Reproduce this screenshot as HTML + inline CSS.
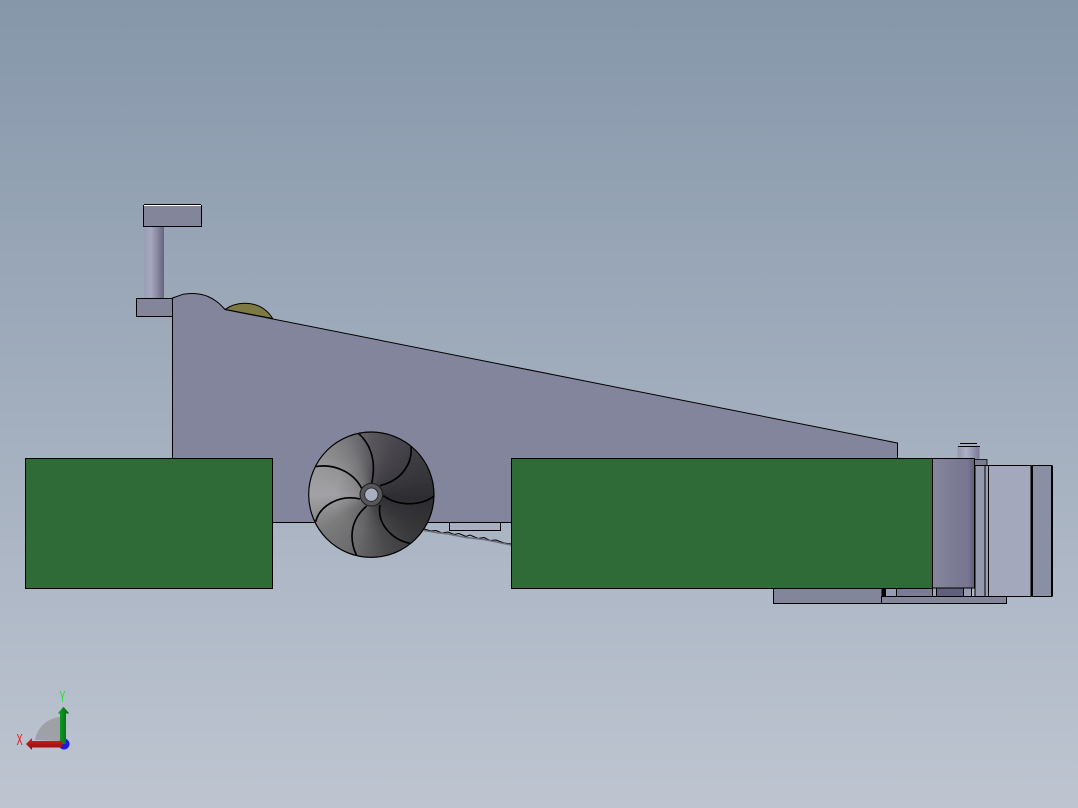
<!DOCTYPE html>
<html><head><meta charset="utf-8">
<style>
html,body{margin:0;padding:0;width:1078px;height:808px;overflow:hidden}
body{position:relative;background:linear-gradient(#8697aa,#bec5d1)}
#fan{position:absolute;left:308px;top:431.5px;width:126px;height:126px;border-radius:50%;
background:
radial-gradient(circle at 50% 50%,rgba(50,50,55,.3) 0,rgba(50,50,55,0) 40%),
conic-gradient(from 0deg,#59565c 0deg,#48464c 25deg,#3a393e 60deg,#2d2d31 95deg,#37373a 130deg,#4a4a4c 165deg,#69696b 195deg,#7c7c7d 235deg,#a3a3a7 270deg,#949496 305deg,#7a7a7c 335deg,#59565c 360deg)}
svg{position:absolute;left:0;top:0}
</style></head><body>
<svg width="1078" height="808" viewBox="0 0 1078 808" style="z-index:0">
<defs>
<linearGradient id="cy1" x1="0" x2="1" y1="0" y2="0"><stop offset="0" stop-color="#9a9eb4"/><stop offset=".35" stop-color="#a5a8bd"/><stop offset=".7" stop-color="#85859f"/><stop offset="1" stop-color="#636380"/></linearGradient>
<linearGradient id="cy2" x1="0" x2="1" y1="0" y2="0"><stop offset="0" stop-color="#85889c"/><stop offset=".55" stop-color="#7b7a93"/><stop offset=".85" stop-color="#77758f"/><stop offset="1" stop-color="#5f5e78"/></linearGradient>
<linearGradient id="cy3" x1="0" x2="1" y1="0" y2="0"><stop offset="0" stop-color="#9498ae"/><stop offset=".4" stop-color="#adb1c5"/><stop offset="1" stop-color="#7a7a96"/></linearGradient>
<linearGradient id="gs" x1="0" x2="1" y1="0" y2="0"><stop offset="0" stop-color="#0fa526"/><stop offset=".6" stop-color="#0a7f1c"/><stop offset="1" stop-color="#06600f"/></linearGradient>
<linearGradient id="rs" x1="0" x2="0" y1="0" y2="1"><stop offset="0" stop-color="#d92020"/><stop offset="1" stop-color="#8e0c0c"/></linearGradient>
</defs>
<!-- body -->
<path d="M225 309.500L272.700 318.500C266 308 256 303.300 245 303.300C236 303.300 230 306 225 309.500Z" fill="#7c7a42" stroke="#000" stroke-width="1"/>
<rect x="144" y="226" width="20" height="72" fill="url(#cy1)"/>
<path d="M172.500 522.500V298L183 294.300C190 293 200 293 208 296.500C216 300 220 304 225 309.500L897.500 443V522.500Z" fill="#82859b" stroke="#000" stroke-width="1"/>
<rect x="136.500" y="298.500" width="36" height="18" fill="#83869b" stroke="#000"/>
<rect x="143.500" y="205.500" width="58" height="21" fill="#83869b" stroke="#000"/>
<path d="M144 204.500H201" stroke="#000" stroke-width="1"/>
<path d="M144 205.500H201" stroke="#fff" stroke-width="1"/>
<!-- under parts -->
<rect x="449.500" y="522.500" width="51" height="8" fill="#a9afbf" stroke="#000"/>
<path d="M424 529L431 531L436 530.500L442 533L448 532L454 534.500L459 533.500L466 536.500L470 535L478 538.500L484 537.500L490 540.500L496 540L504 543L511 544" fill="none" stroke="#000" stroke-width="1"/>
<path d="M424 530.500L436 532.500L448 534L466 537.500L484 539.500L511 545" fill="none" stroke="#6d7080" stroke-width="1.500"/>
<!-- right assembly -->
<path d="M960 443.500H977" stroke="#000"/>
<rect x="957.500" y="446" width="22" height="14" fill="url(#cy3)"/>
<path d="M958 446.500H980" stroke="#000"/>
<rect x="972" y="459.500" width="15" height="6" fill="#7b7b92" stroke="#000" stroke-width=".8"/>
<rect x="975" y="465.500" width="10" height="131" fill="#9599ad" stroke="#000"/>
<rect x="985" y="465.500" width="3.500" height="131" fill="#9ca0b5" stroke="#000"/>
<rect x="988.500" y="465.500" width="42.500" height="131" fill="#a3a8bd" stroke="#000"/>
<rect x="1031" y="465.500" width="1.500" height="131" fill="#000"/>
<rect x="1032.500" y="465.500" width="19" height="131" fill="#8a90a4" stroke="#000"/>
<rect x="1051.500" y="465.500" width="1.500" height="131" fill="#000"/>
<rect x="882" y="588" width="3" height="9" fill="#000"/>
<rect x="885.500" y="588" width="11" height="9" fill="#989cb0" stroke="#000"/>
<rect x="896.500" y="588" width="36" height="9" fill="#7c7b95" stroke="#000"/>
<rect x="932.500" y="588" width="4" height="9" fill="#a0a4b6" stroke="#000"/>
<rect x="936.500" y="588" width="27" height="9" fill="#605f7c" stroke="#000"/>
<rect x="963.500" y="588" width="8" height="9" fill="#989cb0" stroke="#000"/>
<rect x="773.500" y="588" width="108.500" height="15.500" fill="#83869b" stroke="#000"/>
<rect x="881.500" y="596.500" width="125" height="7" fill="#83869b" stroke="#000"/>
<rect x="932.500" y="458.500" width="42" height="129.500" fill="url(#cy2)" stroke="#000"/>
<!-- green -->
<rect x="25.500" y="458.500" width="247" height="130" fill="#2f6b37" stroke="#000"/>
<rect x="511.500" y="458.500" width="421" height="130" fill="#2f6b37" stroke="#000"/>
<!-- triad -->
<path d="M35 740C37 728 47 718 60 717V741Z" fill="#9ea1a6"/>
<circle cx="64" cy="744" r="5.500" fill="#1a1ae0"/>
<path d="M60 741V713.500H57.700L63.500 706.700L69.300 713.500H66V744H60Z" fill="url(#gs)"/>
<path d="M62.500 741V747.500H32V750L26 744L32 738V741Z" fill="url(#rs)"/>
<text transform="translate(59.500 702) scale(.55 1)" font-family="Liberation Sans,sans-serif" font-size="16" fill="#1fe03a">Y</text>
<text transform="translate(16.500 745) scale(.58 1)" font-family="Liberation Sans,sans-serif" font-size="16" fill="#e8141c">X</text>
</svg>
<div id="fan"></div>
<svg width="1078" height="808" viewBox="0 0 1078 808" style="z-index:2">
<g transform="translate(300 425) scale(.33333)" fill="none" stroke="#000" stroke-width="5">
<circle cx="214" cy="209" r="188" stroke-width="3.500"/>
<path d="M175 25C205 50 232 100 215 175"/>
<path d="M333 65C338 110 310 165 240 182"/>
<path d="M403 212C370 240 300 248 250 212"/>
<path d="M330 355C280 345 230 300 240 240"/>
<path d="M170 392C150 350 145 290 200 243"/>
<path d="M47 290C60 240 120 208 180 222"/>
<path d="M45 125C100 115 160 140 185 190"/>
<circle cx="214" cy="209" r="34" fill="#57575b" stroke="#1a1a1a" stroke-width="3"/>
<circle cx="214" cy="209" r="20" fill="#a8b0bf" stroke="#222" stroke-width="2.500"/>
</g>
</svg>
</body></html>
